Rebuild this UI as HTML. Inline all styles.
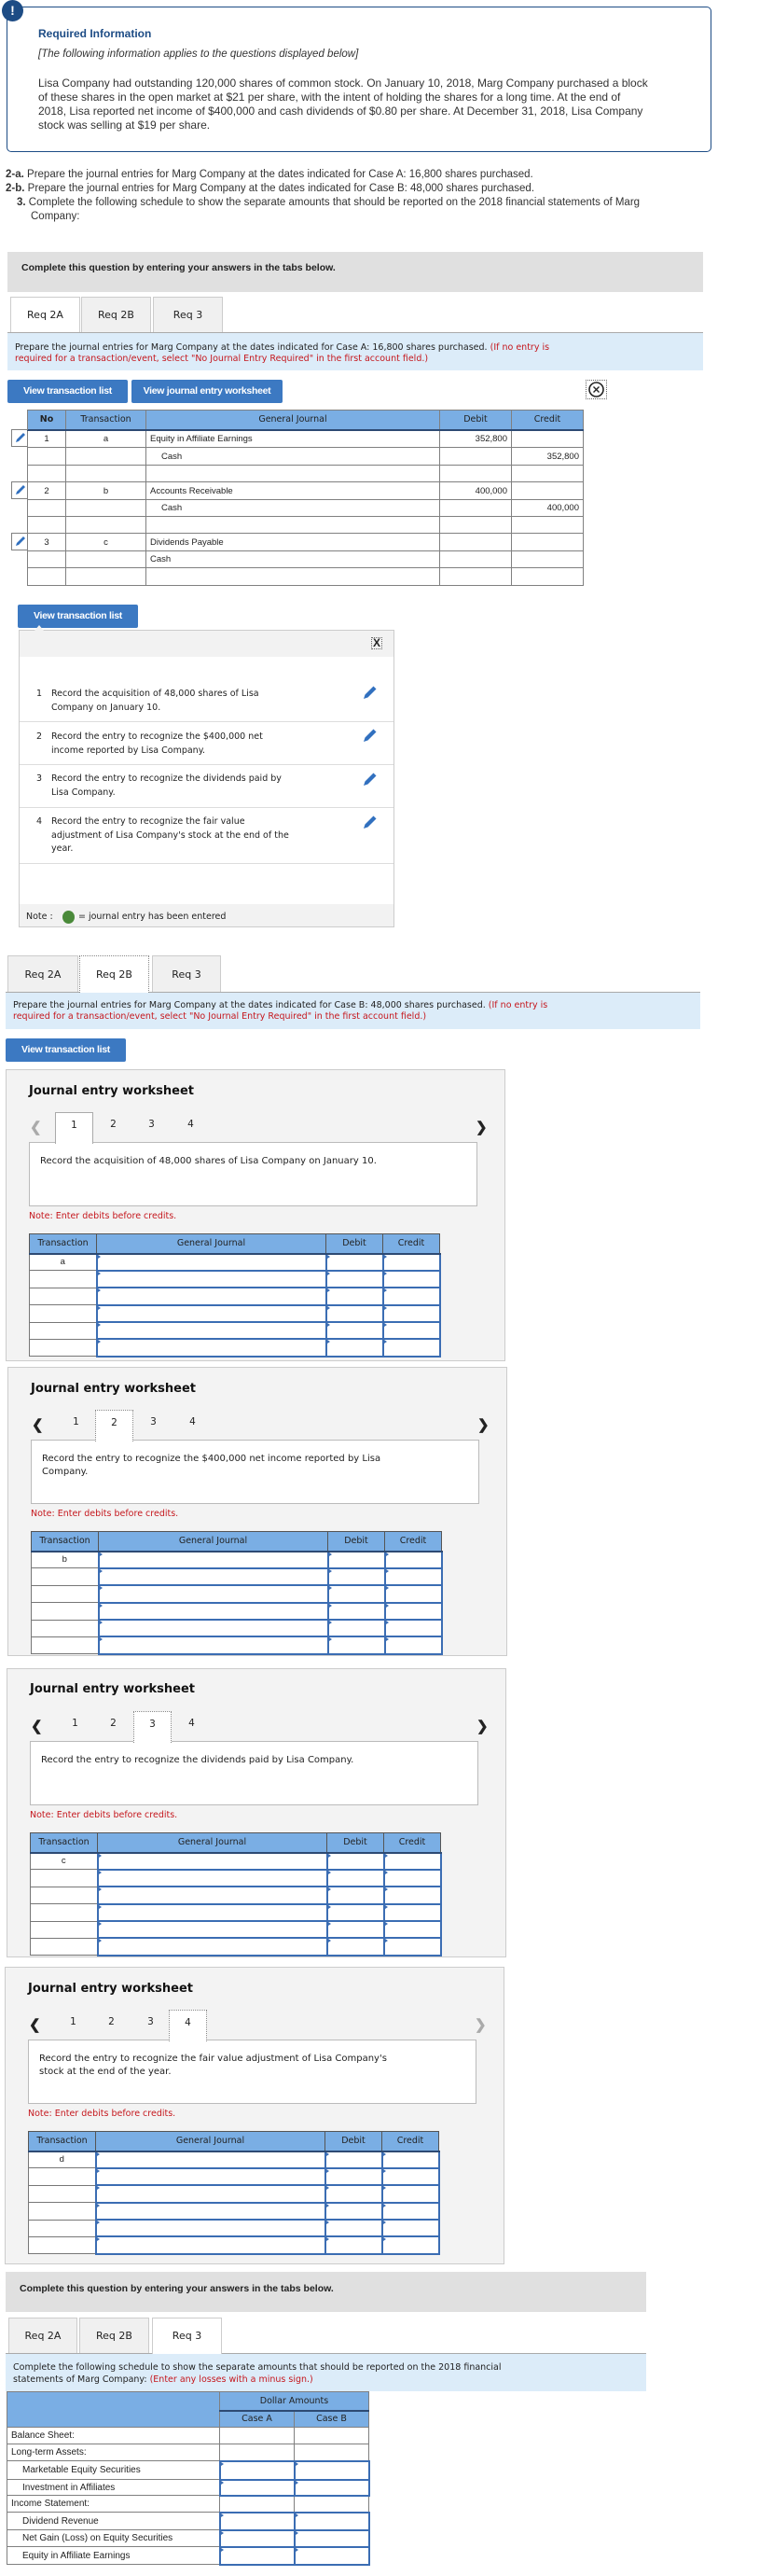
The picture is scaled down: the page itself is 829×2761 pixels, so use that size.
<!DOCTYPE html>
<html><head><meta charset="utf-8">
<style>
*{box-sizing:border-box;margin:0;padding:0}
body{width:829px;height:2761px;background:#fff;position:relative;font-family:"Liberation Sans",sans-serif;color:#222;overflow:hidden}
.a{position:absolute}
.nw{white-space:nowrap}
.dv{font-family:"DejaVu Sans","Liberation Sans",sans-serif}
.btn{position:absolute;background:#3c79c2;color:#fff;font-weight:bold;font-size:10.5px;letter-spacing:-0.3px;text-align:center;border-radius:2px}
.tab{position:absolute;background:#f0f0f0;border:1px solid #ccc;border-bottom:none;font-family:"DejaVu Sans",sans-serif;font-size:11px;text-align:center}
.tab.on{background:#fff}
.blue{position:absolute;background:#dcecf9;font-family:"DejaVu Sans",sans-serif;font-size:9.5px;line-height:12px;white-space:nowrap;border-top:1px solid #aaa}
.red{color:#c5171d}
table{border-collapse:collapse;position:absolute;table-layout:fixed}
.jt td,.jt th{border:1px solid #808080;font-size:9.5px;padding:0 4px;overflow:hidden;white-space:nowrap}
.jt th{background:#7aaee4;font-weight:normal;font-family:"DejaVu Sans",sans-serif;color:#222;text-align:center;border-bottom:2px solid #2d4a73}
.ws{position:absolute;width:536px;height:312px;background:#f3f3f3;border:1px solid #ccc}
.ws .t{position:absolute;left:24px;top:15px;font-family:"DejaVu Sans",sans-serif;font-weight:bold;font-size:13px;color:#111}
.ws .n{position:absolute;top:45px;width:41px;height:33px;font-family:"DejaVu Sans",sans-serif;font-size:10.5px;text-align:center;line-height:26px}
.ws .n.on{background:#fff;border:1px dotted #888;border-bottom:none;z-index:2;height:34px}
.ws .rb{position:absolute;left:24px;top:77px;width:481px;height:69px;background:#fff;border:1.5px solid #bbb;font-family:"DejaVu Sans",sans-serif;font-size:10px;line-height:14px;padding:13px 0 0 11px;white-space:nowrap}
.ws .nt{position:absolute;left:24px;top:151px;font-family:"DejaVu Sans",sans-serif;font-size:9.5px;color:#c5171d}
.ws .arr{position:absolute;top:52px;font-size:15px;font-weight:bold}
.wt{left:24px;top:175px}
.wt th{background:#7aaee4;border:1px solid #555;border-bottom:2px solid #2d4a73;font-family:"DejaVu Sans",sans-serif;font-weight:normal;font-size:9.5px;height:21px}
.wt td{border:1px solid #777;background:#fff;height:18.4px;font-size:9.5px;text-align:center}
.wt td.i{border:2px solid #3b6db3;position:relative}
.wt td.i:before{content:"";position:absolute;left:0;top:0;border-left:3px solid #3b6db3;border-top:2px solid transparent;border-bottom:2px solid transparent}
.st td,.st th{border:1px solid #808080;font-size:10px;white-space:nowrap}
.st th{background:#7aaee4;font-weight:normal;font-family:"DejaVu Sans",sans-serif;font-size:9.5px}
.st td.i{border:2px solid #3b6db3;position:relative}
.st td.i:before{content:"";position:absolute;left:0;top:0;border-left:3px solid #3b6db3;border-top:2px solid transparent;border-bottom:2px solid transparent}
.pi{position:absolute}
.it{position:absolute;font-family:"DejaVu Sans",sans-serif;font-size:9.5px;line-height:14.5px;white-space:nowrap}
</style></head><body>

<!-- info box -->
<div class="a" style="left:7px;top:7px;width:756px;height:156px;border:1.5px solid #1d4c85;border-radius:5px"></div>
<div class="a" style="left:2px;top:0;width:23px;height:23px;border-radius:50%;background:#1d4c85;color:#fff;font-weight:bold;font-size:14px;text-align:center;line-height:23px">!</div>
<div class="a nw" style="left:41px;top:29px;font-weight:bold;font-size:12px;color:#1d4c85">Required Information</div>
<div class="a nw" style="left:41px;top:52px;font-style:italic;font-size:11.5px;color:#333">[The following information applies to the questions displayed below]</div>
<div class="a nw" style="left:41px;top:82px;font-size:12px;line-height:15px;color:#333">Lisa Company had outstanding 120,000 shares of common stock. On January 10, 2018, Marg Company purchased a block<br>of these shares in the open market at $21 per share, with the intent of holding the shares for a long time. At the end of<br>2018, Lisa reported net income of $400,000 and cash dividends of $0.80 per share. At December 31, 2018, Lisa Company<br>stock was selling at $19 per share.</div>
<div class="a nw" style="left:6px;top:180px;font-size:11.5px;line-height:15px;color:#333"><b>2-a.</b> Prepare the journal entries for Marg Company at the dates indicated for Case A: 16,800 shares purchased.<br><b>2-b.</b> Prepare the journal entries for Marg Company at the dates indicated for Case B: 48,000 shares purchased.<br><span style="padding-left:12px"><b>3.</b> Complete the following schedule to show the separate amounts that should be reported on the 2018 financial statements of Marg</span><br><span style="padding-left:27px">Company:</span></div>

<!-- gray box 1 -->
<div class="a" style="left:8px;top:270px;width:746px;height:43px;background:#e0e0e0"></div>
<div class="a nw" style="left:23px;top:281px;font-weight:bold;font-size:10.5px">Complete this question by entering your answers in the tabs below.</div>
<div class="tab on" style="left:11px;top:318px;width:75px;height:38px;line-height:38px">Req 2A</div>
<div class="tab" style="left:87px;top:318px;width:75px;height:38px;line-height:38px">Req 2B</div>
<div class="tab" style="left:164px;top:318px;width:75px;height:38px;line-height:38px">Req 3</div>
<div class="blue" style="left:8px;top:356px;width:746px;height:41px;padding:10px 0 0 8px">Prepare the journal entries for Marg Company at the dates indicated for Case A: 16,800 shares purchased. <span class="red">(If no entry is</span><br><span class="red">required for a transaction/event, select "No Journal Entry Required" in the first account field.)</span></div>
<div class="btn" style="left:8px;top:407px;width:129px;height:25px;line-height:25px">View transaction list</div>
<div class="btn" style="left:141px;top:407px;width:162px;height:25px;line-height:25px">View journal entry worksheet</div>
<div class="a" style="left:628px;top:407px;width:23px;height:21px;border:1px dotted #666"><svg width="21" height="19" viewBox="0 0 21 19"><circle cx="10.5" cy="9.5" r="7.5" fill="none" stroke="#222" stroke-width="1.6"/><path d="M7.5 6.5l6 6M13.5 6.5l-6 6" stroke="#222" stroke-width="1.4"/></svg></div>

<!-- journal table case A -->
<table class="jt" style="left:29px;top:439px;width:596px">
<colgroup><col style="width:41px"><col style="width:86px"><col style="width:315px"><col style="width:77px"><col style="width:77px"></colgroup>
<tr style="height:21px"><th style="font-weight:bold">No</th><th>Transaction</th><th>General Journal</th><th>Debit</th><th>Credit</th></tr>
<tr style="height:19px"><td style="text-align:center">1</td><td style="text-align:center">a</td><td>Equity in Affiliate Earnings</td><td style="text-align:right">352,800</td><td></td></tr>
<tr style="height:19px"><td></td><td></td><td style="padding-left:16px">Cash</td><td></td><td style="text-align:right">352,800</td></tr>
<tr style="height:18px"><td></td><td></td><td></td><td></td><td></td></tr>
<tr style="height:19px"><td style="text-align:center">2</td><td style="text-align:center">b</td><td>Accounts Receivable</td><td style="text-align:right">400,000</td><td></td></tr>
<tr style="height:18px"><td></td><td></td><td style="padding-left:16px">Cash</td><td></td><td style="text-align:right">400,000</td></tr>
<tr style="height:18px"><td></td><td></td><td></td><td></td><td></td></tr>
<tr style="height:19px"><td style="text-align:center">3</td><td style="text-align:center">c</td><td>Dividends Payable</td><td></td><td></td></tr>
<tr style="height:18px"><td></td><td></td><td>Cash</td><td></td><td></td></tr>
<tr style="height:19px"><td></td><td></td><td></td><td></td><td></td></tr>
</table>
<div class="a" style="left:12px;top:460px;width:18px;height:19px;border:1px solid #808080;border-right:none"><svg width="17" height="17" viewBox="0 0 17 17"><path d="M4 13l1-3 7-7 2 2-7 7z" fill="#3170bf"/></svg></div>
<div class="a" style="left:12px;top:516px;width:18px;height:19px;border:1px solid #808080;border-right:none"><svg width="17" height="17" viewBox="0 0 17 17"><path d="M4 13l1-3 7-7 2 2-7 7z" fill="#3170bf"/></svg></div>
<div class="a" style="left:12px;top:571px;width:18px;height:19px;border:1px solid #808080;border-right:none"><svg width="17" height="17" viewBox="0 0 17 17"><path d="M4 13l1-3 7-7 2 2-7 7z" fill="#3170bf"/></svg></div>

<!-- transaction list popup -->
<div class="btn" style="left:19px;top:648px;width:129px;height:25px;line-height:25px">View transaction list</div>
<div class="a" style="left:20px;top:675px;width:403px;height:319px;border:1px solid #ccc;background:#fff"></div>
<div class="a" style="left:21px;top:676px;width:401px;height:28px;background:#f2f2f2"></div>
<div class="a" style="left:37px;top:670px;border-left:5px solid transparent;border-right:5px solid transparent;border-bottom:6px solid #f2f2f2"></div>
<div class="a" style="left:398px;top:683px;width:12px;height:13px;border:1px dotted #666;font-weight:bold;font-size:12px;line-height:11px;text-align:center">X</div>
<div class="it" style="left:39px;top:737px">1</div><div class="it" style="left:55px;top:737px">Record the acquisition of 48,000 shares of Lisa<br>Company on January 10.</div>
<div class="a" style="left:21px;top:773px;width:401px;height:1px;background:#ddd"></div>
<div class="it" style="left:39px;top:783px">2</div><div class="it" style="left:55px;top:783px">Record the entry to recognize the $400,000 net<br>income reported by Lisa Company.</div>
<div class="a" style="left:21px;top:819px;width:401px;height:1px;background:#ddd"></div>
<div class="it" style="left:39px;top:828px">3</div><div class="it" style="left:55px;top:828px">Record the entry to recognize the dividends paid by<br>Lisa Company.</div>
<div class="a" style="left:21px;top:865px;width:401px;height:1px;background:#ddd"></div>
<div class="it" style="left:39px;top:874px">4</div><div class="it" style="left:55px;top:874px">Record the entry to recognize the fair value<br>adjustment of Lisa Company's stock at the end of the<br>year.</div>
<div class="a" style="left:21px;top:925px;width:401px;height:1px;background:#ddd"></div>
<svg class="pi" style="left:387px;top:733px" width="18" height="18" viewBox="0 0 18 18"><path d="M3 16l1.5-4.5 9-9 3 3-9 9z" fill="#3170bf"/></svg>
<svg class="pi" style="left:387px;top:779px" width="18" height="18" viewBox="0 0 18 18"><path d="M3 16l1.5-4.5 9-9 3 3-9 9z" fill="#3170bf"/></svg>
<svg class="pi" style="left:387px;top:826px" width="18" height="18" viewBox="0 0 18 18"><path d="M3 16l1.5-4.5 9-9 3 3-9 9z" fill="#3170bf"/></svg>
<svg class="pi" style="left:387px;top:872px" width="18" height="18" viewBox="0 0 18 18"><path d="M3 16l1.5-4.5 9-9 3 3-9 9z" fill="#3170bf"/></svg>
<div class="a" style="left:21px;top:969px;width:401px;height:24px;background:#f2f2f2"></div>
<div class="it" style="left:28px;top:976px">Note :</div>
<div class="a" style="left:67px;top:976px;width:13px;height:14px;border-radius:50%;background:#4a8a3a"></div>
<div class="it" style="left:84px;top:976px">= journal entry has been entered</div>

<!-- tabs 2 -->
<div class="tab" style="left:8px;top:1024px;width:76px;height:39px;line-height:39px">Req 2A</div>
<div class="tab on" style="left:85px;top:1024px;width:75px;height:40px;line-height:39px;border:1px dotted #888;border-bottom:none;z-index:2">Req 2B</div>
<div class="tab" style="left:163px;top:1024px;width:74px;height:39px;line-height:39px">Req 3</div>
<div class="blue" style="left:6px;top:1063px;width:745px;height:40px;padding:8px 0 0 8px">Prepare the journal entries for Marg Company at the dates indicated for Case B: 48,000 shares purchased. <span class="red">(If no entry is</span><br><span class="red">required for a transaction/event, select "No Journal Entry Required" in the first account field.)</span></div>
<div class="btn" style="left:6px;top:1113px;width:129px;height:25px;line-height:25px">View transaction list</div>

<!-- WS1 -->
<div class="ws" style="left:6px;top:1146px;height:313px">
<div class="t">Journal entry worksheet</div>
<div class="arr" style="left:25px;color:#aaa">&#10094;</div><div class="arr" style="left:503px">&#10095;</div>
<div class="n on" style="left:52px;border:1px solid #aaa;border-bottom:none">1</div><div class="n" style="left:94px">2</div><div class="n" style="left:135px">3</div><div class="n" style="left:177px">4</div>
<div class="rb">Record the acquisition of 48,000 shares of Lisa Company on January 10.</div>
<div class="nt">Note: Enter debits before credits.</div>
<table class="wt"><colgroup><col style="width:72px"><col style="width:246px"><col style="width:61px"><col style="width:61px"></colgroup>
<tr><th>Transaction</th><th>General Journal</th><th>Debit</th><th>Credit</th></tr>
<tr><td>a</td><td class="i"></td><td class="i"></td><td class="i"></td></tr>
<tr><td></td><td class="i"></td><td class="i"></td><td class="i"></td></tr>
<tr><td></td><td class="i"></td><td class="i"></td><td class="i"></td></tr>
<tr><td></td><td class="i"></td><td class="i"></td><td class="i"></td></tr>
<tr><td></td><td class="i"></td><td class="i"></td><td class="i"></td></tr>
<tr><td></td><td class="i"></td><td class="i"></td><td class="i"></td></tr>
</table></div>

<!-- WS2 -->
<div class="ws" style="left:8px;top:1465px;height:310px">
<div class="t">Journal entry worksheet</div>
<div class="arr" style="left:25px">&#10094;</div><div class="arr" style="left:503px">&#10095;</div>
<div class="n" style="left:52px">1</div><div class="n on" style="left:93px">2</div><div class="n" style="left:135px">3</div><div class="n" style="left:177px">4</div>
<div class="rb">Record the entry to recognize the $400,000 net income reported by Lisa<br>Company.</div>
<div class="nt">Note: Enter debits before credits.</div>
<table class="wt"><colgroup><col style="width:72px"><col style="width:246px"><col style="width:61px"><col style="width:61px"></colgroup>
<tr><th>Transaction</th><th>General Journal</th><th>Debit</th><th>Credit</th></tr>
<tr><td>b</td><td class="i"></td><td class="i"></td><td class="i"></td></tr>
<tr><td></td><td class="i"></td><td class="i"></td><td class="i"></td></tr>
<tr><td></td><td class="i"></td><td class="i"></td><td class="i"></td></tr>
<tr><td></td><td class="i"></td><td class="i"></td><td class="i"></td></tr>
<tr><td></td><td class="i"></td><td class="i"></td><td class="i"></td></tr>
<tr><td></td><td class="i"></td><td class="i"></td><td class="i"></td></tr>
</table></div>

<!-- WS3 -->
<div class="ws" style="left:7px;top:1788px;height:310px">
<div class="t" style="top:14px">Journal entry worksheet</div>
<div class="arr" style="left:25px">&#10094;</div><div class="arr" style="left:503px">&#10095;</div>
<div class="n" style="left:52px">1</div><div class="n" style="left:93px">2</div><div class="n on" style="left:135px">3</div><div class="n" style="left:177px">4</div>
<div class="rb">Record the entry to recognize the dividends paid by Lisa Company.</div>
<div class="nt">Note: Enter debits before credits.</div>
<table class="wt"><colgroup><col style="width:72px"><col style="width:246px"><col style="width:61px"><col style="width:61px"></colgroup>
<tr><th>Transaction</th><th>General Journal</th><th>Debit</th><th>Credit</th></tr>
<tr><td>c</td><td class="i"></td><td class="i"></td><td class="i"></td></tr>
<tr><td></td><td class="i"></td><td class="i"></td><td class="i"></td></tr>
<tr><td></td><td class="i"></td><td class="i"></td><td class="i"></td></tr>
<tr><td></td><td class="i"></td><td class="i"></td><td class="i"></td></tr>
<tr><td></td><td class="i"></td><td class="i"></td><td class="i"></td></tr>
<tr><td></td><td class="i"></td><td class="i"></td><td class="i"></td></tr>
</table></div>

<!-- WS4 -->
<div class="ws" style="left:5px;top:2108px;height:319px">
<div class="t">Journal entry worksheet</div>
<div class="arr" style="left:25px">&#10094;</div><div class="arr" style="left:503px;color:#aaa">&#10095;</div>
<div class="n" style="left:52px">1</div><div class="n" style="left:93px">2</div><div class="n" style="left:135px">3</div><div class="n on" style="left:175px">4</div>
<div class="rb">Record the entry to recognize the fair value adjustment of Lisa Company's<br>stock at the end of the year.</div>
<div class="nt">Note: Enter debits before credits.</div>
<table class="wt"><colgroup><col style="width:72px"><col style="width:246px"><col style="width:61px"><col style="width:61px"></colgroup>
<tr><th>Transaction</th><th>General Journal</th><th>Debit</th><th>Credit</th></tr>
<tr><td>d</td><td class="i"></td><td class="i"></td><td class="i"></td></tr>
<tr><td></td><td class="i"></td><td class="i"></td><td class="i"></td></tr>
<tr><td></td><td class="i"></td><td class="i"></td><td class="i"></td></tr>
<tr><td></td><td class="i"></td><td class="i"></td><td class="i"></td></tr>
<tr><td></td><td class="i"></td><td class="i"></td><td class="i"></td></tr>
<tr><td></td><td class="i"></td><td class="i"></td><td class="i"></td></tr>
</table></div>

<!-- gray box 2 -->
<div class="a" style="left:6px;top:2435px;width:687px;height:43px;background:#e0e0e0"></div>
<div class="a nw" style="left:21px;top:2447px;font-weight:bold;font-size:10.5px">Complete this question by entering your answers in the tabs below.</div>
<div class="tab" style="left:9px;top:2484px;width:74px;height:38px;line-height:38px">Req 2A</div>
<div class="tab" style="left:85px;top:2484px;width:75px;height:38px;line-height:38px">Req 2B</div>
<div class="tab on" style="left:163px;top:2484px;width:75px;height:39px;line-height:38px;z-index:2">Req 3</div>
<div class="blue" style="left:6px;top:2522px;width:687px;height:41px;padding:9px 0 0 8px;line-height:12.5px">Complete the following schedule to show the separate amounts that should be reported on the 2018 financial<br>statements of Marg Company: <span class="red">(Enter any losses with a minus sign.)</span></div>

<table class="st" style="left:7px;top:2563px;width:388px">
<colgroup><col style="width:228px"><col style="width:80px"><col style="width:80px"></colgroup>
<tr style="height:20px"><th rowspan="2"></th><th colspan="2" style="border-bottom:2px solid #2d4a73">Dollar Amounts</th></tr>
<tr style="height:18px"><th>Case A</th><th>Case B</th></tr>
<tr style="height:18px"><td style="padding-left:4px">Balance Sheet:</td><td></td><td></td></tr>
<tr style="height:18px"><td style="padding-left:4px">Long-term Assets:</td><td></td><td></td></tr>
<tr style="height:20px"><td style="padding-left:16px">Marketable Equity Securities</td><td class="i"></td><td class="i"></td></tr>
<tr style="height:17px"><td style="padding-left:16px">Investment in Affiliates</td><td class="i"></td><td class="i"></td></tr>
<tr style="height:18px"><td style="padding-left:4px">Income Statement:</td><td></td><td></td></tr>
<tr style="height:19px"><td style="padding-left:16px">Dividend Revenue</td><td class="i"></td><td class="i"></td></tr>
<tr style="height:18px"><td style="padding-left:16px">Net Gain (Loss) on Equity Securities</td><td class="i"></td><td class="i"></td></tr>
<tr style="height:19px"><td style="padding-left:16px">Equity in Affiliate Earnings</td><td class="i"></td><td class="i"></td></tr>
</table>
</body></html>
